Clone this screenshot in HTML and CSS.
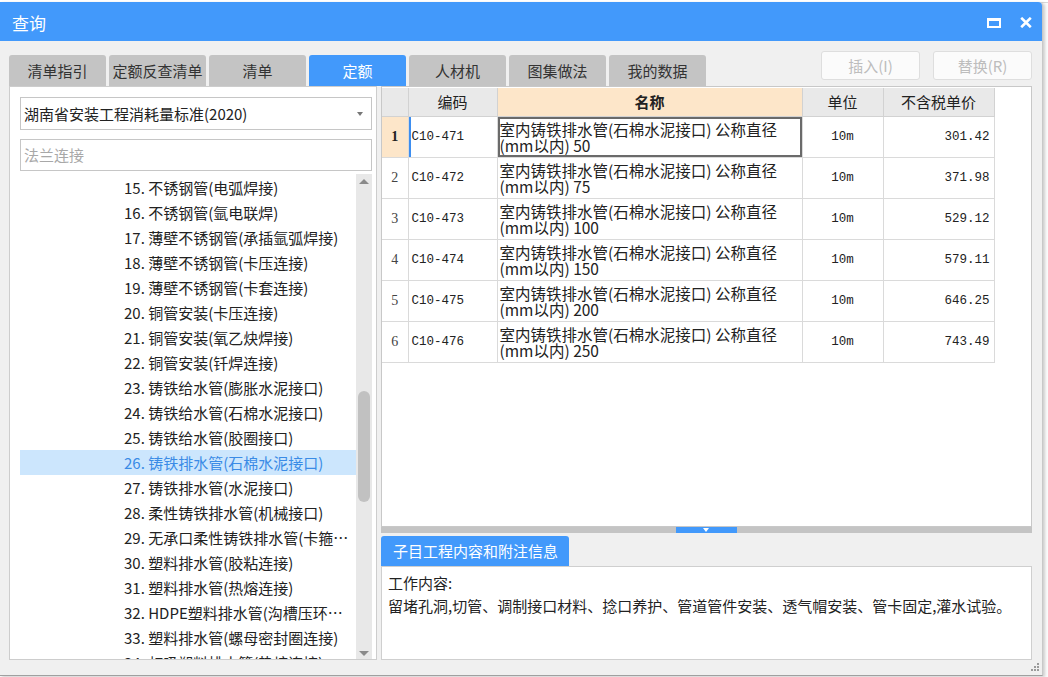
FILE: index.html
```html
<!DOCTYPE html>
<html lang="zh-CN">
<head>
<meta charset="utf-8">
<title>查询</title>
<link rel="stylesheet" href="styles.css">
</head>
<body>
<div class="bgstrip"></div>
<div class="window">
  <div class="titlebar">
    <span class="title">查询</span>
    <div class="title-actions">
      <svg class="ico-max" width="14" height="10" viewBox="0 0 14 10"><rect x="1" y="1.5" width="12" height="7.5" fill="none" stroke="#fff" stroke-width="2"/><rect x="0" y="0" width="14" height="3" fill="#fff"/></svg>
      <svg class="ico-close" width="12" height="11" viewBox="0 0 12 11"><path d="M1.2 0.8 L10.8 10.2 M10.8 0.8 L1.2 10.2" stroke="#fff" stroke-width="2.6" stroke-linecap="butt"/></svg>
    </div>
  </div>
  <div class="body">
    <div class="tabrow">
      <div class="tabs">
        <div class="tab">清单指引</div>
        <div class="tab">定额反查清单</div>
        <div class="tab">清单</div>
        <div class="tab active">定额</div>
        <div class="tab">人材机</div>
        <div class="tab">图集做法</div>
        <div class="tab">我的数据</div>
      </div>
      <div class="actions">
        <div class="btn">插入(I)</div>
        <div class="btn">替换(R)</div>
      </div>
    </div>
    <div class="main">
      <div class="left">
        <div class="select">
          <span>湖南省安装工程消耗量标准(2020)</span>
          <span class="caret"></span>
        </div>
        <div class="search">法兰连接</div>
        <div class="listwrap">
          <ul class="list">
            <li>15. 不锈钢管(电弧焊接)</li>
            <li>16. 不锈钢管(氩电联焊)</li>
            <li>17. 薄壁不锈钢管(承插氩弧焊接)</li>
            <li>18. 薄壁不锈钢管(卡压连接)</li>
            <li>19. 薄壁不锈钢管(卡套连接)</li>
            <li>20. 铜管安装(卡压连接)</li>
            <li>21. 铜管安装(氧乙炔焊接)</li>
            <li>22. 铜管安装(钎焊连接)</li>
            <li>23. 铸铁给水管(膨胀水泥接口)</li>
            <li>24. 铸铁给水管(石棉水泥接口)</li>
            <li>25. 铸铁给水管(胶圈接口)</li>
            <li class="sel">26. 铸铁排水管(石棉水泥接口)</li>
            <li>27. 铸铁排水管(水泥接口)</li>
            <li>28. 柔性铸铁排水管(机械接口)</li>
            <li>29. 无承口柔性铸铁排水管(卡箍连接)</li>
            <li>30. 塑料排水管(胶粘连接)</li>
            <li>31. 塑料排水管(热熔连接)</li>
            <li>32. HDPE塑料排水管(沟槽压环连接)</li>
            <li>33. 塑料排水管(螺母密封圈连接)</li>
            <li>34. 虹吸塑料排水管(热熔连接)</li>
          </ul>
          <div class="scrollbar">
            <span class="arrow up"></span>
            <span class="thumb"></span>
            <span class="arrow down"></span>
          </div>
        </div>
      </div>
      <div class="right">
        <div class="gridpanel">
          <table class="grid">
            <colgroup>
              <col class="c-no"><col class="c-code"><col class="c-name"><col class="c-unit"><col class="c-price">
            </colgroup>
            <thead>
              <tr><th></th><th>编码</th><th class="hl">名称</th><th>单位</th><th>不含税单价</th></tr>
            </thead>
            <tbody>
              <tr class="cur"><td class="no">1</td><td class="code">C10-471</td><td class="name">室内铸铁排水管(石棉水泥接口) 公称直径(mm以内) 50</td><td class="unit">10m</td><td class="price">301.42</td></tr>
              <tr><td class="no">2</td><td class="code">C10-472</td><td class="name">室内铸铁排水管(石棉水泥接口) 公称直径(mm以内) 75</td><td class="unit">10m</td><td class="price">371.98</td></tr>
              <tr><td class="no">3</td><td class="code">C10-473</td><td class="name">室内铸铁排水管(石棉水泥接口) 公称直径(mm以内) 100</td><td class="unit">10m</td><td class="price">529.12</td></tr>
              <tr><td class="no">4</td><td class="code">C10-474</td><td class="name">室内铸铁排水管(石棉水泥接口) 公称直径(mm以内) 150</td><td class="unit">10m</td><td class="price">579.11</td></tr>
              <tr><td class="no">5</td><td class="code">C10-475</td><td class="name">室内铸铁排水管(石棉水泥接口) 公称直径(mm以内) 200</td><td class="unit">10m</td><td class="price">646.25</td></tr>
              <tr><td class="no">6</td><td class="code">C10-476</td><td class="name">室内铸铁排水管(石棉水泥接口) 公称直径(mm以内) 250</td><td class="unit">10m</td><td class="price">743.49</td></tr>
            </tbody>
          </table>
        </div>
        <div class="splitter"><span class="handle"></span></div>
        <div class="infotabs"><div class="infotab">子目工程内容和附注信息</div></div>
        <div class="infobox">
          <p>工作内容:</p>
          <p>留堵孔洞,切管、调制接口材料、捻口养护、管道管件安装、透气帽安装、管卡固定,灌水试验。</p>
        </div>
      </div>
    </div>
  </div>
  <svg class="grip" width="10" height="10" viewBox="0 0 10 10">
    <g fill="#9a9a9a"><rect x="7" y="1" width="2" height="2"/><rect x="4" y="4" width="2" height="2"/><rect x="7" y="4" width="2" height="2"/><rect x="1" y="7" width="2" height="2"/><rect x="4" y="7" width="2" height="2"/><rect x="7" y="7" width="2" height="2"/></g>
  </svg>
</div>
</body>
</html>
```

FILE: styles.css
```css
* { box-sizing: border-box; }
html, body { margin: 0; padding: 0; }
body {
  width: 1048px;
  height: 677px;
  overflow: hidden;
  background: #fbfbfb;
  font-family: "Noto Sans CJK SC", "Noto Sans", sans-serif;
  color: #222;
}
.bgstrip {
  height: 3px;
  background: #fff;
  border-bottom: 1px solid #d8d8d8;
}
.window {
  position: relative;
  width: 1043px;
  height: 674px;
  margin-top: -1px;
  background: #f0f0f0;
  border-bottom: 1px solid #a0a0a0;
  border-right: 1px solid #c8c8c8;
  border-top-right-radius: 4px;
  box-shadow: 2px 1px 3px rgba(0,0,0,0.18);
  display: flex;
  flex-direction: column;
}
.titlebar {
  height: 39px;
  flex: none;
  background: #4299fb;
  border-top-right-radius: 4px;
  display: flex;
  align-items: center;
  justify-content: space-between;
  padding: 2px 10px 0 12px;
}
.title {
  color: #fff;
  font-size: 17px;
  line-height: 1;
}
.title-actions {
  display: flex;
  align-items: center;
  gap: 19px;
}
.ico-max { display: block; }
.ico-close { display: block; }
.body {
  flex: 1;
  display: flex;
  flex-direction: column;
  padding: 10px 10px 15px 9px;
  min-height: 0;
}
.tabrow {
  height: 35px;
  flex: none;
  display: flex;
  justify-content: space-between;
}
.tabs {
  display: flex;
  gap: 3px;
  align-self: flex-end;
}
.tab {
  width: 97px;
  height: 31px;
  background: #c4c4c4;
  border-radius: 3px 3px 0 0;
  font-size: 15px;
  line-height: 31px;
  text-align: center;
  color: #333;
}
.tab.active {
  background: #4299fb;
  color: #fff;
}
.actions {
  display: flex;
  gap: 13px;
  align-self: flex-start;
}
.btn {
  width: 99px;
  height: 29px;
  border: 1px solid #dedede;
  border-radius: 3px;
  background: #fbfbfb;
  color: #bdbdbd;
  font-size: 15px;
  line-height: 27px;
  text-align: center;
}
.main {
  flex: 1;
  display: flex;
  gap: 4px;
  min-height: 0;
}
.left {
  width: 368px;
  background: #fff;
  border: 1px solid #cdcdcd;
  padding: 10px 4px 0 10px;
  display: flex;
  flex-direction: column;
  min-height: 0;
}
.select {
  height: 33px;
  border: 1px solid #c6c6c6;
  display: flex;
  align-items: center;
  justify-content: space-between;
  padding: 0 8px 0 3px;
  font-size: 15px;
  flex: none;
}
.caret {
  width: 0;
  height: 0;
  border-left: 3.5px solid transparent;
  border-right: 3.5px solid transparent;
  border-top: 4px solid #777;
  margin-top: 1px;
}
.search {
  margin-top: 9px;
  height: 32px;
  border: 1px solid #c6c6c6;
  padding: 0 3px;
  font-size: 15px;
  line-height: 30px;
  color: #a8a8a8;
  flex: none;
}
.listwrap {
  margin-top: 3px;
  flex: 1;
  min-height: 0;
  display: flex;
  overflow: hidden;
}
.list {
  list-style: none;
  margin: 0;
  padding: 1px 0 0;
  width: 336px;
  flex: none;
  overflow: hidden;
}
.list li {
  height: 25px;
  line-height: 25px;
  font-size: 15px;
  padding: 0 2px 0 104px;
  white-space: nowrap;
  overflow: hidden;
  text-overflow: ellipsis;
  color: #222;
}
.list li.sel {
  background: #cce6fd;
  color: #3a8be6;
}
.scrollbar {
  position: relative;
  width: 16px;
  flex: none;
  background: #e8e8e8;
}
.arrow {
  position: absolute;
  left: 3px;
  width: 0;
  height: 0;
  border-left: 5px solid transparent;
  border-right: 5px solid transparent;
}
.arrow.up { top: 5px; border-bottom: 5px solid #8a8a8a; }
.arrow.down { bottom: 3px; border-top: 5px solid #8a8a8a; }
.thumb {
  position: absolute;
  left: 2px;
  width: 12px;
  top: 217px;
  height: 111px;
  background: #c1c1c1;
  border-radius: 6px;
}
.right {
  width: 652px;
  display: flex;
  flex-direction: column;
  min-height: 0;
}
.gridpanel {
  height: 441px;
  flex: none;
  background: #fff;
  border: 1px solid #c8c8c8;
  padding-top: 1px;
  overflow: hidden;
}
.grid {
  border-collapse: collapse;
  table-layout: fixed;
  width: 612px;
}
.c-no { width: 26px; }
.c-code { width: 89px; }
.c-name { width: 305px; }
.c-unit { width: 81px; }
.c-price { width: 111px; }
.grid th {
  height: 28px;
  background: #e9e9e9;
  border: 1px solid #d2d2d2;
  border-top: none;
  font-weight: normal;
  font-size: 15px;
  color: #222;
  padding: 0;
}
.grid th:first-child { border-left: none; }
.grid th.hl {
  background: #fde6c9;
  font-weight: bold;
}
.grid td {
  height: 41px;
  border: 1px solid #dadada;
  padding: 0 3px;
  vertical-align: middle;
}
.grid td:first-child { border-left: none; }
.grid td.no {
  font-family: "Liberation Serif", serif;
  font-size: 14px;
  color: #444;
  text-align: center;
  padding: 0;
}
.grid tr.cur td.no {
  background: #fde6c9;
  font-weight: bold;
  color: #222;
}
.grid td.code {
  font-family: "Liberation Mono", monospace;
  font-size: 12.5px;
  padding-left: 3px;
}
.grid tr.cur td.code {
  box-shadow: inset 2px 0 0 #3d8ef0;
}
.grid td.name {
  font-size: 15.5px;
  line-height: 16px;
  padding: 0 16px 0 2px;
}
.grid tr.cur td.name {
  box-shadow: inset 0 0 0 2px #6a6a6a;
}
.grid td.unit {
  font-family: "Liberation Mono", monospace;
  font-size: 12.5px;
  text-align: center;
}
.grid td.price {
  font-family: "Liberation Mono", monospace;
  font-size: 12.5px;
  text-align: right;
  padding-right: 4px;
}
.splitter {
  height: 6px;
  flex: none;
  background: #c4c4c4;
  display: flex;
  justify-content: center;
}
.handle {
  width: 61px;
  height: 6px;
  background: #4299fb;
  position: relative;
}
.handle::after {
  content: "";
  position: absolute;
  left: 27px;
  top: 1px;
  border-left: 3.5px solid transparent;
  border-right: 3.5px solid transparent;
  border-top: 4px solid #fff;
}
.infotabs {
  margin-top: 3px;
  flex: none;
  display: flex;
}
.infotab {
  height: 30px;
  background: #4299fb;
  color: #fff;
  font-size: 15px;
  line-height: 30px;
  padding: 0 11px 0 12px;
  border-radius: 3px 3px 0 0;
}
.infobox {
  flex: 1;
  background: #fff;
  border: 1px solid #cfcfcf;
  padding: 4px 6px;
  font-size: 15px;
  line-height: 23px;
  color: #222;
}
.infobox p { margin: 0; white-space: nowrap; }
.grip {
  position: absolute;
  right: 2px;
  bottom: 3px;
}
```
